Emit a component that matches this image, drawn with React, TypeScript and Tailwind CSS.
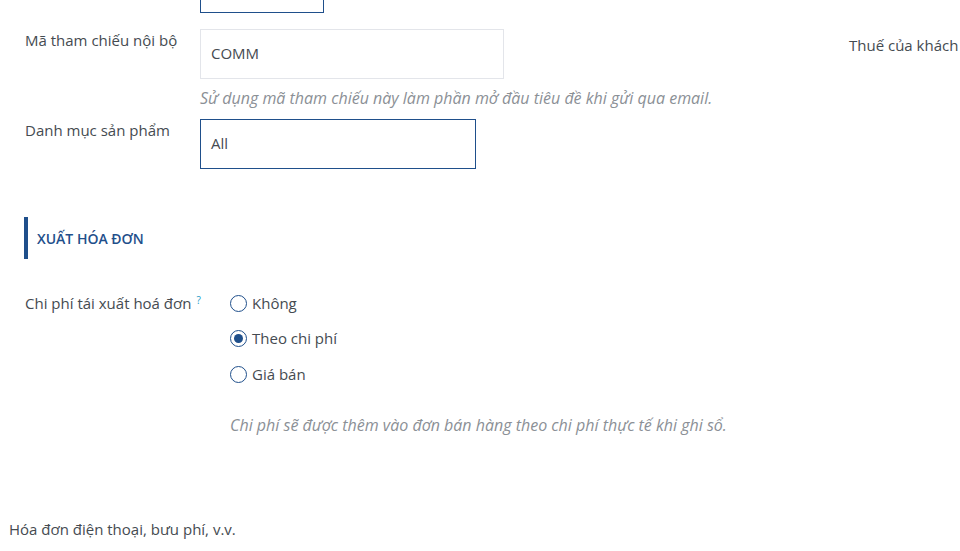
import React from "react";

const blue = "border-[#1f4f8b]";

function Radio({ label, checked }: { label: string; checked?: boolean }) {
  return (
    <label className="flex items-center h-[20px] gap-[5px]">
      <span className={`w-[17px] h-[17px] rounded-full border ${blue} bg-white flex items-center justify-center`}>
        {checked && <span className="w-[9px] h-[9px] rounded-full bg-[#1f4f8b]" />}
      </span>
      <span>{label}</span>
    </label>
  );
}

export default function App() {
  return (
    <div
      className="w-[960px] h-[551px] overflow-hidden bg-white text-[15px] text-[#454b51] relative"
      style={{ fontFamily: '"Open Sans", "Noto Sans", sans-serif' }}
    >
      <div className="flex">
        <div className="w-[849px] shrink-0">
          {/* bottom of previous field */}
          <div className="pl-[200px]">
            <div className={`w-[124px] h-[13px] border-x border-b ${blue}`} />
          </div>

          {/* Mã tham chiếu nội bộ */}
          <div className="flex mt-[16px] pl-[25px]">
            <div className="w-[175px] leading-[22px]">Mã tham chiếu nội bộ</div>
            <div>
              <div className="w-[304px] h-[50px] border border-[#e3e5ea] flex items-center px-[10px] pb-[1px]">COMM</div>
              <div className="mt-[8px] italic text-[16px] text-[#8b9096] leading-[22px]">
                Sử dụng mã tham chiếu này làm phần mở đầu tiêu đề khi gửi qua email.
              </div>
            </div>
          </div>

          {/* Danh mục sản phẩm */}
          <div className="flex mt-[10px] pl-[25px]">
            <div className="w-[175px] leading-[22px]">Danh mục sản phẩm</div>
            <div className={`w-[276px] h-[50px] border ${blue} flex items-center px-[10px] pb-[1px]`}>All</div>
          </div>

          {/* section */}
          <div className="mt-[48px] ml-[24px] border-l-[4px] border-[#1f4f8b] h-[42px] flex items-center pl-[9px]">
            <span className="text-[14px] font-semibold text-[#1f4f8b]">XUẤT HÓA ĐƠN</span>
          </div>

          <div className="flex mt-[34px] pl-[25px]">
            <div className="w-[205px] leading-[20px]">
              Chi phí tái xuất hoá đơn
              <sup className="text-[#1c9bc9] text-[10px] ml-[5px] relative -top-[5px]">?</sup>
            </div>
            <div>
              <div className="flex flex-col gap-[15.5px]">
                <Radio label="Không" />
                <Radio label="Theo chi phí" checked />
                <Radio label="Giá bán" />
              </div>
              <div className="mt-[30px] italic text-[16px] text-[#8b9096] leading-[22px]">
                Chi phí sẽ được thêm vào đơn bán hàng theo chi phí thực tế khi ghi sổ.
              </div>
            </div>
          </div>

          <div className="mt-[82px] pl-[9px] leading-[22px]">
            Hóa đơn điện thoại, bưu phí, v.v.
          </div>
        </div>

        <div className="pt-[34px] whitespace-nowrap leading-[22px]">Thuế của khách</div>
      </div>
    </div>
  );
}
